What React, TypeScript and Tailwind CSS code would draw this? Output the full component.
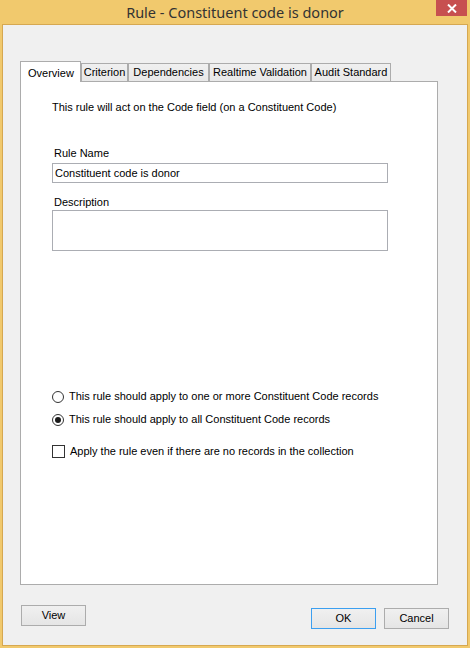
import React from "react";

// ── Small controls ────────────────────────────────────────────────────────────

function Radio({ checked, label }: { checked?: boolean; label: string }) {
  return (
    <div className="flex items-center h-[13px]">
      <span className="w-[12px] h-[12px] rounded-full border border-[#333333] bg-white flex items-center justify-center">
        {checked && <span className="w-[6px] h-[6px] rounded-full bg-[#1a1a1a]" />}
      </span>
      <span className="ml-[5px] leading-[13px]">{label}</span>
    </div>
  );
}

function Checkbox({ label }: { label: string }) {
  return (
    <div className="flex items-center h-[13px]">
      <span className="w-[13px] h-[13px] border border-[#333333] bg-white" />
      <span className="ml-[5px] leading-[13px]">{label}</span>
    </div>
  );
}

function Button({ label, focused, className }: { label: string; focused?: boolean; className?: string }) {
  return (
    <button
      className={
        "w-[65px] h-[21px] flex items-center justify-center bg-gradient-to-b from-[#f0f0f0] to-[#e5e5e5] border text-[#000] " +
        (focused ? "border-[#3c9ff0] " : "border-[#acacac] ") +
        (className ?? "")
      }
    >
      {label}
    </button>
  );
}

// ── Tabs ──────────────────────────────────────────────────────────────────────

const tabs = [
  { label: "Overview", width: "w-[61px]" },
  { label: "Criterion", width: "w-[47px]" },
  { label: "Dependencies", width: "w-[81px]" },
  { label: "Realtime Validation", width: "w-[102px]" },
  { label: "Audit Standard", width: "w-[80px]" },
];

// ── Component ─────────────────────────────────────────────────────────────────

export default function App() {
  return (
    <div className="w-[470px] h-[648px] bg-[#f1c96d] flex flex-col font-['Liberation_Sans',Arial,sans-serif] text-[11px] text-[#000] overflow-hidden">
      {/* ── Title bar ── */}
      <div className="relative h-[24px] flex items-center justify-center shrink-0">
        <span className="font-['Noto_Sans','Open_Sans',sans-serif] text-[14.5px] text-[#333333] leading-none">
          Rule - Constituent code is donor
        </span>
        <div className="absolute top-0 right-[3px] w-[31px] h-[16px] bg-[#c75050] flex items-center justify-center">
          <svg width="10" height="9" viewBox="0 0 10 9">
            <path d="M1 0.5 L9 8.5 M9 0.5 L1 8.5" stroke="#ffffff" strokeWidth="2" />
          </svg>
        </div>
      </div>

      {/* ── Client area ── */}
      <div className="flex-1 px-[2px] pb-[2px] flex">
        <div className="flex-1 bg-[#f0f0f0] border border-[#d6a851] pl-[17px] pt-[36px] flex flex-col">
          {/* tab strip */}
          <div className="flex items-end h-[21px] -mb-px relative z-10">
            {tabs.map((t, i) =>
              i === 0 ? (
                <div
                  key={t.label}
                  className={t.width + " h-[21px] bg-white border border-b-0 border-[#acacac] flex items-start pt-[3px] pl-[7px]"}
                >
                  {t.label}
                </div>
              ) : (
                <div
                  key={t.label}
                  className={t.width + " h-[19px] bg-gradient-to-b from-[#f0f0f0] to-[#e8e8e8] border border-[#acacac] flex items-center justify-center"}
                >
                  {t.label}
                </div>
              )
            )}
          </div>

          {/* tab panel */}
          <div className="w-[418px] h-[504px] bg-white border border-[#acacac] pl-[31px] flex flex-col text-[#000]">
            <div className="mt-[19px] leading-[13px]">This rule will act on the Code field (on a Constituent Code)</div>

            <div className="mt-[33px] ml-[2px] leading-[13px]">Rule Name</div>
            <div className="mt-[3px] w-[336px] h-[20px] border border-[#abadb3] flex items-center pl-[2px]">
              Constituent code is donor
            </div>

            <div className="mt-[13px] ml-[2px] leading-[13px]">Description</div>
            <div className="mt-[1px] w-[336px] h-[41px] border border-[#abadb3]" />

            <div className="mt-[139px]">
              <Radio label="This rule should apply to one or more Constituent Code records" />
            </div>
            <div className="mt-[10px]">
              <Radio checked label="This rule should apply to all Constituent Code records" />
            </div>
            <div className="mt-[19px]">
              <Checkbox label="Apply the rule even if there are no records in the collection" />
            </div>
          </div>

          {/* buttons */}
          <div className="flex items-start mt-[20px] w-[429px]">
            <Button label="View" className="ml-[1px]" />
            <div className="flex-1" />
            <Button label="OK" focused className="mt-[3px]" />
            <Button label="Cancel" className="mt-[3px] ml-[8px]" />
          </div>
        </div>
      </div>
    </div>
  );
}
